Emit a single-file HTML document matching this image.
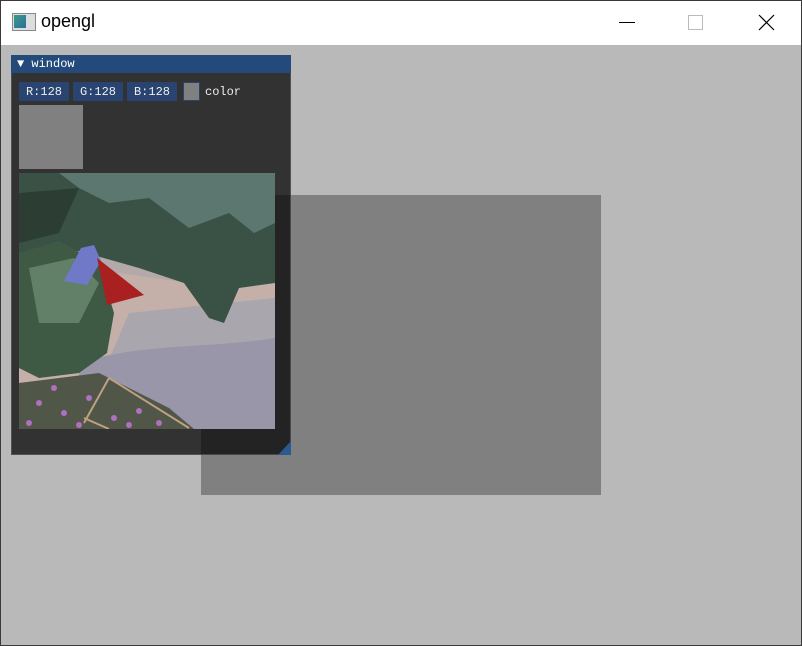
<!DOCTYPE html>
<html><head><style>
body{margin:0;width:802px;height:646px;overflow:hidden;background:#b9b9b9;font-family:"Liberation Mono",monospace;position:relative}
.frame{position:absolute;inset:0;border:1px solid #3a3a3a;box-sizing:border-box;pointer-events:none}
.tb{position:absolute;left:0;top:0;width:802px;height:45px;background:#fff}
.tt{position:absolute;left:41px;top:11px;font:18px "Liberation Sans",sans-serif;color:#000}
.abs{position:absolute}
.win{left:11px;top:55px;width:280px;height:400px;background:rgba(0,0,0,0.73);box-shadow:0 0 0 1px rgba(110,110,128,0.5) inset}
.ttl{left:11px;top:55px;width:280px;height:18px;background:#234a7a;color:#fff;font-size:12px;line-height:19px}
.btn{top:82px;height:19px;background:#294470;color:#eee;font-size:12px;line-height:20px;text-align:center}
</style></head><body>
<div class="tb"></div>
<div class="abs" style="left:12px;top:13px;width:22px;height:16px;border:1px solid #888;background:#ddd"></div>
<div class="abs" style="left:14px;top:15px;width:12px;height:13px;background:linear-gradient(135deg,#3a9a8a,#2f6f9a)"></div>
<div class="tt">opengl</div>
<div class="abs" style="left:619px;top:22px;width:16px;height:1px;background:#000"></div>
<div class="abs" style="left:688px;top:15px;width:13px;height:13px;border:1px solid #bbb"></div>
<svg class="abs" style="left:758px;top:14px" width="17" height="17"><path d="M1 1L16 16M16 1L1 16" stroke="#000" stroke-width="1.2"/></svg>
<div class="abs" style="left:201px;top:195px;width:400px;height:300px;background:#808080"></div>
<div class="abs win"></div>
<div class="abs ttl"><span style="margin-left:6px">▼ window</span></div>
<div class="abs btn" style="left:19px;width:50px">R:128</div>
<div class="abs btn" style="left:73px;width:50px">G:128</div>
<div class="abs btn" style="left:127px;width:50px">B:128</div>
<div class="abs" style="left:183px;top:82px;width:17px;height:19px;background:#808080;box-sizing:border-box;border:1px solid #294470"></div>
<div class="abs" style="left:205px;top:82px;color:#eee;font-size:12px;line-height:20px">color</div>
<div class="abs" style="left:19px;top:105px;width:64px;height:64px;background:#808080"></div>
<svg class="abs" style="left:19px;top:173px" width="256" height="256" viewBox="0 0 256 256">
<rect width="256" height="256" fill="#b3a8aa"/>
<path d="M0 120L100 100L170 110L256 110V256H0Z" fill="#c4b0a8"/>
<path d="M110 140L256 125V256H60Z" fill="#aaa6ae"/>
<path d="M60 190C120 170 200 175 256 165V256H60Z" fill="#9896a8"/>
<path d="M0 0H256V110L220 115L205 150L190 145L165 110L120 95L60 78L0 82Z" fill="#3a5246"/>
<path d="M40 0H256V50L235 60L210 40L170 55L130 25L90 30L60 15Z" fill="#6a8880" opacity=".7"/>
<path d="M0 20L60 15L40 60L0 70Z" fill="#2c3e34"/>
<path d="M0 80L40 68L80 90L95 140L88 180L60 200L20 205L0 195Z" fill="#3e5a44"/>
<path d="M10 95L55 85L80 110L60 150L20 150Z" fill="#728e78" opacity=".7"/>
<path d="M45 108L62 75L75 72L82 88L68 112Z" fill="#7078c8"/>
<path d="M78 85L125 122L88 132Z" fill="#a82020"/>
<path d="M0 210L80 200L150 235L175 256H0Z" fill="#505648"/>
<g fill="#b070c0"><circle cx="20" cy="230" r="3"/><circle cx="45" cy="240" r="3"/><circle cx="70" cy="225" r="3"/><circle cx="95" cy="245" r="3"/><circle cx="120" cy="238" r="3"/><circle cx="10" cy="250" r="3"/><circle cx="60" cy="252" r="3"/><circle cx="140" cy="250" r="3"/><circle cx="110" cy="252" r="3"/><circle cx="35" cy="215" r="3"/></g>
<path d="M90 205L170 255M90 205L65 250M65 245L90 256" stroke="#c0a080" stroke-width="2" fill="none"/>
</svg>
<svg class="abs" style="left:278px;top:441px" width="13" height="14"><path d="M13 0V14H0Z" fill="#2a5a90"/></svg>
<div class="frame"></div>
</body></html>
